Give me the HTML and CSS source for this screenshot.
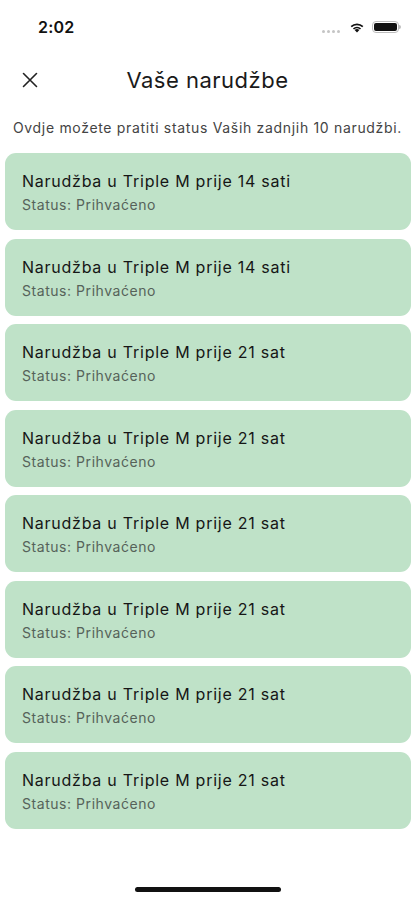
FILE: index.html
```html
<!DOCTYPE html>
<html lang="hr">
<head>
<meta charset="utf-8">
<meta name="viewport" content="width=device-width, initial-scale=1">
<title>Vaše narudžbe</title>
<link rel="stylesheet" href="styles.css">
</head>
<body>
<div class="screen">
  <div class="statusbar">
    <span class="time">2:02</span>
    <div class="status-icons">
      <span class="signal"><i></i><i></i><i></i><i></i></span>
      <svg class="wifi" width="16" height="12" viewBox="0 0 16 12" aria-hidden="true">
        <path d="M8 11.6 L5.6 9.1 A3.4 3.4 0 0 1 10.4 9.1 Z" fill="#111"/>
        <path d="M3.9 7.4 A5.8 5.8 0 0 1 12.1 7.4 L10.9 8.6 A4.1 4.1 0 0 0 5.1 8.6 Z" fill="#111"/>
        <path d="M1.6 5.1 A9.1 9.1 0 0 1 14.4 5.1 L13.2 6.3 A7.4 7.4 0 0 0 2.8 6.3 Z" fill="#111"/>
      </svg>
      <span class="battery"><span class="battery-fill"></span></span>
    </div>
  </div>

  <header class="topbar">
    <button class="close" aria-label="Zatvori">
      <svg width="16" height="16" viewBox="0 0 16 16" aria-hidden="true">
        <path d="M1.5 1.5 L14.5 14.5 M14.5 1.5 L1.5 14.5" stroke="#222" stroke-width="1.6" stroke-linecap="round"/>
      </svg>
    </button>
    <h1 class="title">Vaše narudžbe</h1>
  </header>

  <p class="intro">Ovdje možete pratiti status Vaših zadnjih 10 narudžbi.</p>

  <ul class="orders">
    <li class="order"><span class="order-title">Narudžba u Triple M prije 14 sati</span><span class="order-status">Status: Prihvaćeno</span></li>
    <li class="order"><span class="order-title">Narudžba u Triple M prije 14 sati</span><span class="order-status">Status: Prihvaćeno</span></li>
    <li class="order"><span class="order-title">Narudžba u Triple M prije 21 sat</span><span class="order-status">Status: Prihvaćeno</span></li>
    <li class="order"><span class="order-title">Narudžba u Triple M prije 21 sat</span><span class="order-status">Status: Prihvaćeno</span></li>
    <li class="order"><span class="order-title">Narudžba u Triple M prije 21 sat</span><span class="order-status">Status: Prihvaćeno</span></li>
    <li class="order"><span class="order-title">Narudžba u Triple M prije 21 sat</span><span class="order-status">Status: Prihvaćeno</span></li>
    <li class="order"><span class="order-title">Narudžba u Triple M prije 21 sat</span><span class="order-status">Status: Prihvaćeno</span></li>
    <li class="order"><span class="order-title">Narudžba u Triple M prije 21 sat</span><span class="order-status">Status: Prihvaćeno</span></li>
  </ul>

  <div class="home-indicator"></div>
</div>
</body>
</html>
```

FILE: styles.css
```css
* { box-sizing: border-box; }

html, body {
  margin: 0;
  padding: 0;
  background: #ffffff;
}

body {
  font-family: Inter, "Noto Sans", "Liberation Sans", sans-serif;
  color: #1a1a1a;
}

.screen {
  width: 415px;
  height: 900px;
  display: flex;
  flex-direction: column;
  overflow: hidden;
}

.statusbar {
  height: 54px;
  display: flex;
  align-items: center;
  justify-content: space-between;
  padding: 0 16px 0 38px;
}

.time {
  font-size: 16px;
  font-weight: 600;
  letter-spacing: 0.2px;
  color: #111;
}

.status-icons {
  display: flex;
  align-items: center;
  gap: 7px;
}

.signal {
  display: flex;
  gap: 2px;
  align-items: flex-end;
  height: 12px;
  padding-top: 8px;
  margin-right: 2px;
}

.signal i {
  display: block;
  width: 3px;
  height: 3px;
  border-radius: 50%;
  background: #c4c4c4;
}

.wifi { display: block; }

.battery {
  position: relative;
  width: 27px;
  height: 12px;
  border: 1px solid #bdbdbd;
  border-radius: 4px;
  padding: 1px;
  display: flex;
}

.battery::after {
  content: "";
  position: absolute;
  right: -3px;
  top: 3px;
  width: 2px;
  height: 4px;
  border-radius: 0 2px 2px 0;
  background: #bdbdbd;
}

.battery-fill {
  flex: 1;
  background: #111;
  border-radius: 2px;
}

.topbar {
  height: 52px;
  display: grid;
  grid-template-columns: 60px 1fr 60px;
  align-items: center;
}

.close {
  grid-column: 1;
  background: none;
  border: 0;
  padding: 0 0 0 22px;
  display: flex;
  align-items: center;
  cursor: pointer;
}

.title {
  grid-column: 2;
  margin: 0;
  text-align: center;
  font-size: 22px;
  font-weight: 400;
  letter-spacing: 0.5px;
  color: #1a1a1a;
}

.intro {
  margin: 8px 0 0;
  text-align: center;
  font-size: 14px;
  line-height: 28px;
  letter-spacing: 0.68px;
  color: #444;
}

.orders {
  list-style: none;
  margin: 11px 4px 0 5px;
  padding: 0;
  display: flex;
  flex-direction: column;
  gap: 8.5px;
}

.order {
  height: 77px;
  background: #bfe2c8;
  border-radius: 11px;
  padding: 17px 17px 15px;
  display: flex;
  flex-direction: column;
  gap: 3px;
}

.order-title {
  font-size: 16px;
  line-height: 22px;
  letter-spacing: 0.75px;
  color: #161616;
}

.order-status {
  font-size: 14px;
  line-height: 20px;
  letter-spacing: 0.55px;
  color: #56625a;
}

.home-indicator {
  margin: auto auto 8px;
  width: 146px;
  height: 5px;
  border-radius: 3px;
  background: #111;
}
```
